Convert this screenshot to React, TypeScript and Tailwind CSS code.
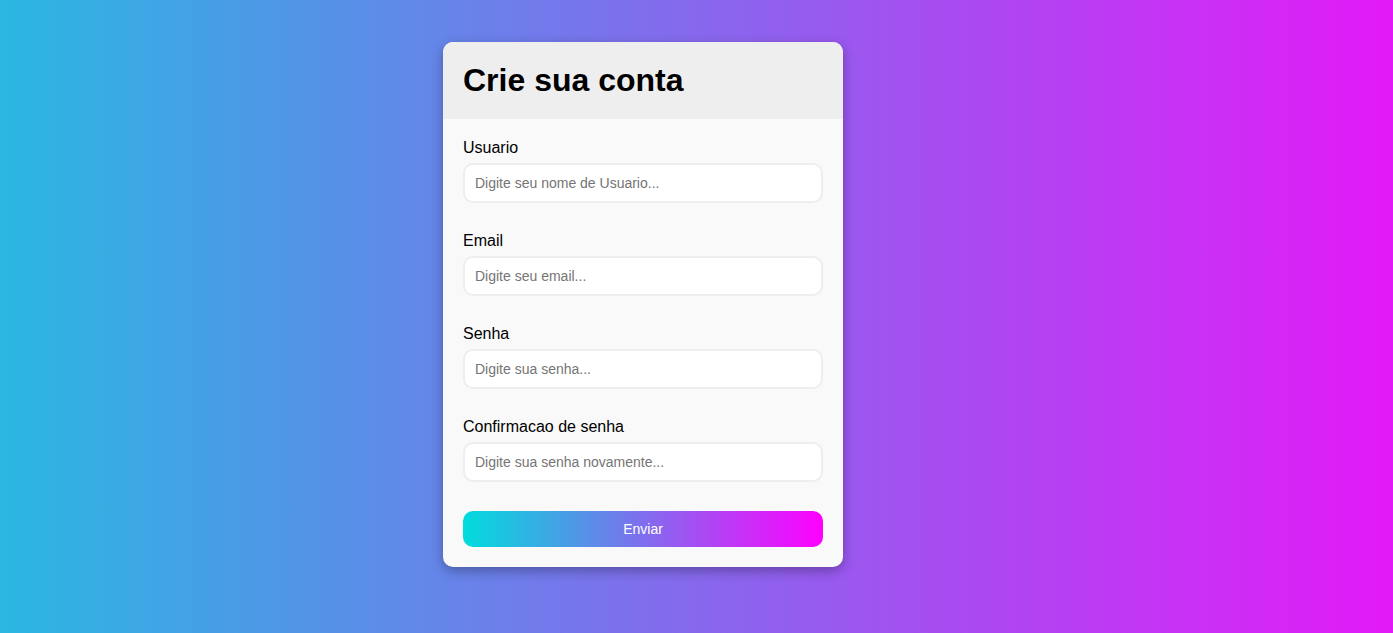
import React from "react";

const fields = [
  { label: "Usuario", placeholder: "Digite seu nome de Usuario...", type: "text" },
  { label: "Email", placeholder: "Digite seu email...", type: "email" },
  { label: "Senha", placeholder: "Digite sua senha...", type: "password" },
  { label: "Confirmacao de senha", placeholder: "Digite sua senha novamente...", type: "password" },
];

export default function App() {
  return (
    <div
      className="w-full h-[633px] flex justify-start items-start pl-[443px] pt-[42px] bg-linear-to-r/srgb from-[#2ab7e2] to-[#e31af8]"
      style={{ fontFamily: '"Liberation Sans", Arial, sans-serif' }}
    >
      <div className="w-[400px] rounded-[10px] overflow-hidden bg-[#f9f9f9] shadow-[0_4px_12px_rgba(0,0,0,0.3)]">
        <div className="bg-[#eeeeee] px-5 py-5">
          <h1 className="text-[32px] leading-[37px] font-bold text-black">Crie sua conta</h1>
        </div>
        <form className="px-5 pt-5 pb-5 flex flex-col">
          {fields.map((f) => (
            <div key={f.label} className="flex flex-col mb-[29px]">
              <label className="text-[16px] leading-[18px] text-black mb-[6px]">{f.label}</label>
              <input
                type={f.type}
                placeholder={f.placeholder}
                className="h-[40px] w-full rounded-[10px] border-2 border-[#eeeeee] bg-white px-[10px] text-[14px] text-black placeholder:text-[#757575] outline-none"
                style={{ fontFamily: '"Liberation Sans", Arial, sans-serif' }}
              />
            </div>
          ))}
          <button
            type="button"
            className="h-[36px] w-full rounded-[10px] bg-linear-to-r/srgb from-[#00dcdc] to-[#ff00ff] text-white text-[14px]"
            style={{ fontFamily: '"Liberation Sans", Arial, sans-serif' }}
          >
            Enviar
          </button>
        </form>
      </div>
    </div>
  );
}
